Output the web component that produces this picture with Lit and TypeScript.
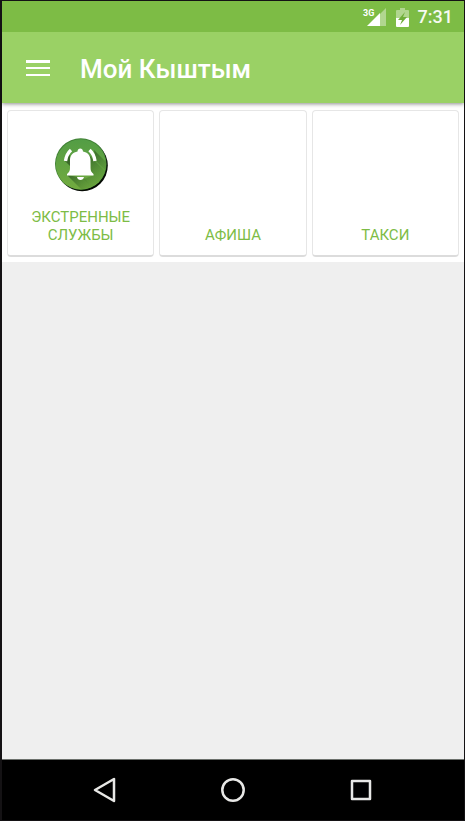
import { LitElement, html, css, svg, nothing } from "lit";
import { customElement, property } from "lit/decorators.js";

const bellIcon = svg`
  <svg class="art" viewBox="0 0 56 56" width="56" height="56" aria-hidden="true">
    <defs>
      <linearGradient id="disc" x1="0" y1="0" x2="0" y2="1">
        <stop offset="0" stop-color="#539d45" />
        <stop offset="1" stop-color="#72ab3f" />
      </linearGradient>
      <linearGradient id="cast" gradientUnits="userSpaceOnUse" x1="22" y1="22" x2="46" y2="46">
        <stop offset="0.2" stop-color="#2f5a22" stop-opacity="0.8" />
        <stop offset="1" stop-color="#4f8a33" stop-opacity="0.2" />
      </linearGradient>
      <clipPath id="round"><circle cx="27.8" cy="27" r="25.2" /></clipPath>
    </defs>
    <circle cx="29.2" cy="28.6" r="25.6" fill="#050a03" />
    <circle cx="27.8" cy="27" r="25.8" fill="#3f8034" />
    <circle cx="27.9" cy="27.4" r="25.1" fill="url(#disc)" />
    <g clip-path="url(#round)" fill="url(#cast)">
      <path d="M34 16L37 23L38 35L41 38L31 42L45 56L60 56L60 42Z" />
      <path d="M41 13L43 24L60 41L60 32Z" />
      <path d="M14 38L32 56L44 56L31 41Z" />
      <path d="M11 23L17 29L17 18Z" />
    </g>
    <path fill="#fff" d="M24.500 14.500C24.500 10.500 30 10.500 30 14.500C34.500 15.300 37.500 18.500 37.500 23V31C37.500 34 38.500 35.500 40.500 37V38.500H14V37C16 35.500 17 34 17 31V23C17 18.500 20 15.300 24.500 14.500Z" />
    <path fill="#fff" d="M24 40H31C30.500 44 24.500 44 24 40Z" />
    <path fill="none" stroke="#fff" stroke-width="3.400" d="M18 13Q13.500 17 12.500 24M36.500 13Q41 17 42 24" />
  </svg>`;

@customElement("status-bar")
export class StatusBar extends LitElement {
  static styles = css`
    :host {
      position: relative;
      z-index: 1;
      display: flex;
      align-items: center;
      justify-content: flex-end;
      height: 31px;
      padding-right: 11px;
      background: #7dbc45;
      color: #f6faf1;
      font: 500 18px/20px Roboto, sans-serif;
    }
    svg {
      display: block;
    }
    .battery {
      margin: 0 9px 0 10px;
    }
    .net {
      font: 700 9px Roboto, sans-serif;
    }
  `;

  render() {
    return html`
      <svg width="24" height="20" viewBox="0 0 24 20" role="img" aria-label="3G">
        <path d="M24 1V19H18V7Z" fill="#b1d68f" />
        <path d="M18 6V19H5Z" fill="#fff" />
        <text class="net" x="1" y="9" fill="#fff">3G</text>
      </svg>
      <svg class="battery" width="13" height="20" viewBox="0 0 13 20" role="img" aria-label="Battery">
        <path d="M4 1H9V3H12Q13 3 13 4V12H0V4Q0 3 1 3H4Z" fill="#b1d68f" />
        <path d="M0 11H13V19Q13 20 12 20H1Q0 20 0 19Z" fill="#fff" />
        <path d="M9 5L7 10H11L4 18L6 13H2Z" fill="#6fae3a" />
      </svg>
      <time>7:31</time>
    `;
  }
}

@customElement("service-card")
export class ServiceCard extends LitElement {
  @property() label = "";
  @property({ type: Boolean }) bell = false;

  static styles = css`
    :host {
      display: block;
      aspect-ratio: 1;
    }
    .card {
      box-sizing: border-box;
      display: flex;
      flex-direction: column;
      align-items: center;
      justify-content: space-between;
      width: 100%;
      height: 100%;
      padding: 26px 10px 11px;
      border: 1px solid #e6e6e6;
      border-bottom: 2px solid #dcdcdc;
      border-radius: 4px;
      background: #fff;
      color: #7dbc45;
      font: 400 15px/18px Roboto, sans-serif;
      text-align: center;
      text-transform: uppercase;
      cursor: pointer;
    }
    .art {
      display: block;
    }
    .label {
      margin-top: auto;
    }
  `;

  render() {
    return html`<button class="card">
      ${this.bell ? bellIcon : nothing}
      <span class="label">${this.label}</span>
    </button>`;
  }
}

@customElement("nav-bar")
export class NavBar extends LitElement {
  static styles = css`
    :host {
      display: block;
      background: #000;
      border-top: 1px solid #6c706c;
      border-bottom: 1px solid #141214;
    }
    nav {
      display: flex;
      justify-content: center;
      height: 60px;
    }
    button {
      display: grid;
      place-items: center;
      width: 128px;
      padding: 0;
      border: 0;
      background: none;
      cursor: pointer;
    }
    svg {
      display: block;
      fill: none;
      stroke: #e8e8e6;
      stroke-width: 2.5;
      stroke-linejoin: round;
    }
  `;

  render() {
    return html`<nav>
      <button aria-label="Назад">
        <svg width="26" height="26" viewBox="0 0 26 26"><path d="M22 2V24L3 13Z" /></svg>
      </button>
      <button aria-label="Домой">
        <svg width="26" height="26" viewBox="0 0 26 26"><circle cx="13" cy="13" r="10.700" /></svg>
      </button>
      <button aria-label="Недавние">
        <svg width="26" height="26" viewBox="0 0 26 26"><path d="M4 4H22V22H4Z" /></svg>
      </button>
    </nav>`;
  }
}

@customElement("app-root")
export class AppRoot extends LitElement {
  static styles = css`
    :host {
      box-sizing: border-box;
      display: flex;
      flex-direction: column;
      min-height: 100vh;
      border: solid #141214;
      border-width: 1px 1px 0 2px;
      background: #efefef;
      font-family: Roboto, sans-serif;
    }
    header {
      position: relative;
      display: flex;
      align-items: center;
      gap: 24px;
      height: 71px;
      padding: 0 18px;
      background: #9ad165;
      box-shadow: 0 1px 4px rgba(0, 0, 0, 0.45);
    }
    .menu {
      display: grid;
      place-items: center;
      width: 36px;
      height: 36px;
      padding: 0;
      border: 0;
      background: none;
      cursor: pointer;
    }
    h1 {
      margin: 0;
      padding-top: 2px;
      color: #fff;
      font-size: 26px;
      font-weight: 500;
      line-height: 32px;
    }
    main {
      flex: 1;
    }
    .cards {
      display: grid;
      grid-template-columns: repeat(3, 1fr);
      gap: 5px;
      padding: 7px 5px 5px;
      background: #fff;
    }
  `;

  render() {
    return html`
      <status-bar></status-bar>
      <header>
        <button class="menu" aria-label="Меню">
          <svg width="24" height="16" viewBox="0 0 24 16" fill="#fff">
            <path d="M0 0H24V3H0ZM0 7H24V9H0ZM0 14H24V16H0Z" />
          </svg>
        </button>
        <h1>Мой Кыштым</h1>
      </header>
      <main>
        <section class="cards">
          <service-card label="Экстренные службы" bell></service-card>
          <service-card label="Афиша"></service-card>
          <service-card label="Такси"></service-card>
        </section>
      </main>
      <nav-bar></nav-bar>
    `;
  }
}
